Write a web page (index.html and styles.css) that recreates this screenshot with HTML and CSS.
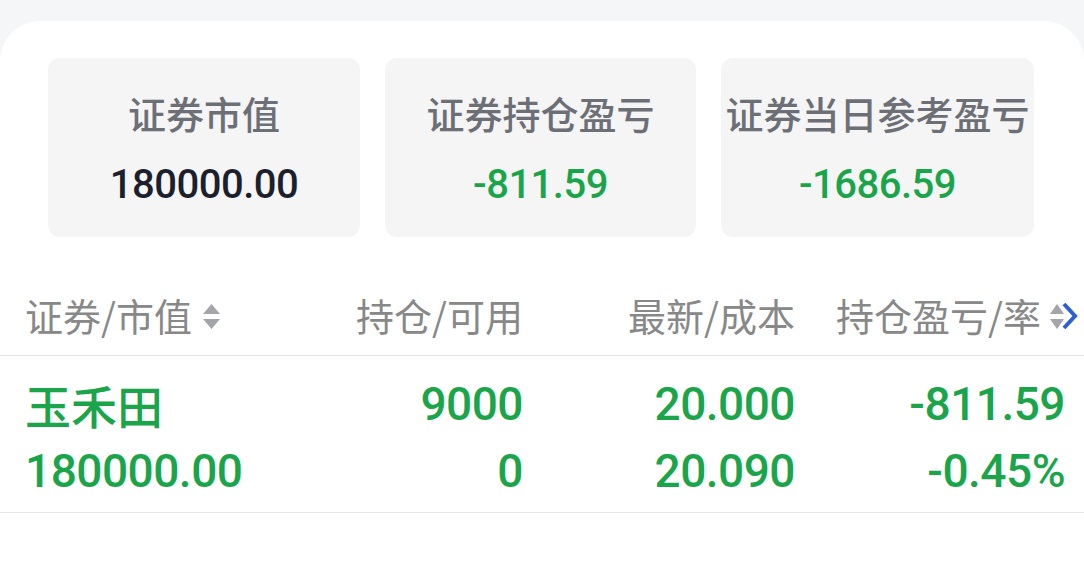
FILE: index.html
```html
<!DOCTYPE html>
<html lang="zh-CN">
<head>
<meta charset="utf-8">
<title>持仓</title>
<link rel="stylesheet" href="styles.css">
</head>
<body>
<div class="card">
  <div class="summary">
    <div class="box">
      <div class="label">证券市值</div>
      <div class="value dark">180000.00</div>
    </div>
    <div class="box">
      <div class="label">证券持仓盈亏</div>
      <div class="value green">-811.59</div>
    </div>
    <div class="box">
      <div class="label">证券当日参考盈亏</div>
      <div class="value green">-1686.59</div>
    </div>
  </div>

  <div class="table">
    <div class="thead">
      <div class="th th-left">证券/市值<svg class="sort" width="17" height="25" viewBox="0 0 17 25"><polygon points="8.5,0 17,10 0,10" fill="#a3a5aa"/><polygon points="0,15 17,15 8.5,25" fill="#a3a5aa"/></svg></div>
      <div class="th">持仓/可用</div>
      <div class="th">最新/成本</div>
      <div class="th th-last">持仓盈亏/率<span class="icons"><svg class="sort2" width="14" height="26" viewBox="0 0 14 26"><polygon points="7,0 14,10 0,10" fill="#a3a5aa"/><polygon points="0,15 14,15 7,25" fill="#a3a5aa"/></svg><svg class="chev" width="17" height="28" viewBox="0 0 17 28"><polyline points="3,2 14,14 3,26" fill="none" stroke="#2d5fd2" stroke-width="4" stroke-linejoin="miter"/></svg></span></div>
    </div>
    <div class="row">
      <div class="cell left">
        <div class="name">玉禾田</div>
        <div class="num">180000.00</div>
      </div>
      <div class="cell">
        <div class="num">9000</div>
        <div class="num">0</div>
      </div>
      <div class="cell">
        <div class="num">20.000</div>
        <div class="num">20.090</div>
      </div>
      <div class="cell">
        <div class="num">-811.59</div>
        <div class="num">-0.45%</div>
      </div>
    </div>
  </div>
</div>
</body>
</html>
```

FILE: styles.css
```css
html, body {
  margin: 0;
  padding: 0;
}

body {
  background: #f5f6f8;
  font-family: "Noto Sans CJK SC", "Noto Sans", sans-serif;
  width: 1084px;
  height: 588px;
  overflow: hidden;
}

.card {
  margin-top: 21px;
  background: #ffffff;
  border-radius: 40px 40px 0 0;
  height: 567px;
  padding-top: 37px;
  box-sizing: border-box;
}

.summary {
  display: grid;
  grid-template-columns: 312px 311px 313px;
  column-gap: 25px;
  padding: 0 48px;
}

.box {
  background: #f5f5f6;
  border-radius: 12px;
  height: 179px;
  display: flex;
  flex-direction: column;
  align-items: center;
  padding-top: 32px;
  box-sizing: border-box;
}

.label {
  font-size: 38px;
  line-height: 46px;
  font-weight: 500;
  color: #6d6f77;
  white-space: nowrap;
}

.value {
  margin-top: 24px;
  font-family: Roboto, "Liberation Sans", sans-serif;
  font-weight: 500;
  font-size: 40px;
  line-height: 50px;
  letter-spacing: -0.5px;
}

.dark {
  color: #1c1f2d;
}

.green {
  color: #1aa54b;
}

.table {
  margin-top: 38px;
}

.thead,
.row {
  display: grid;
  grid-template-columns: 227px 271px 272px 270px;
  padding-left: 25px;
}

.thead {
  height: 80px;
  border-bottom: 1px solid #e4e4e4;
  align-items: center;
}

.th {
  font-size: 38px;
  line-height: 80px;
  color: #888888;
  display: flex;
  align-items: center;
  justify-content: flex-end;
  white-space: nowrap;
}

.th-left {
  justify-content: flex-start;
}

.sort {
  margin-left: 11px;
  margin-top: 2px;
}

.th-last {
  margin-right: -13px;
}

.icons {
  display: flex;
  align-items: center;
  margin-left: 9px;
}

.sort2 {
  margin-top: 4px;
}

.chev {
  margin-left: -3px;
  margin-top: 2px;
}

.row {
  padding-top: 15px;
  padding-bottom: 7px;
  border-bottom: 1px solid #e4e4e4;
}

.cell {
  display: flex;
  flex-direction: column;
  align-items: flex-end;
  color: #1aa54b;
}

.cell.left {
  align-items: flex-start;
}

.name {
  font-size: 46px;
  line-height: 67px;
  font-weight: 500;
}

.num {
  font-family: Roboto, "Liberation Sans", sans-serif;
  font-weight: 500;
  font-size: 46px;
  line-height: 67px;
  letter-spacing: -0.5px;
}
```
